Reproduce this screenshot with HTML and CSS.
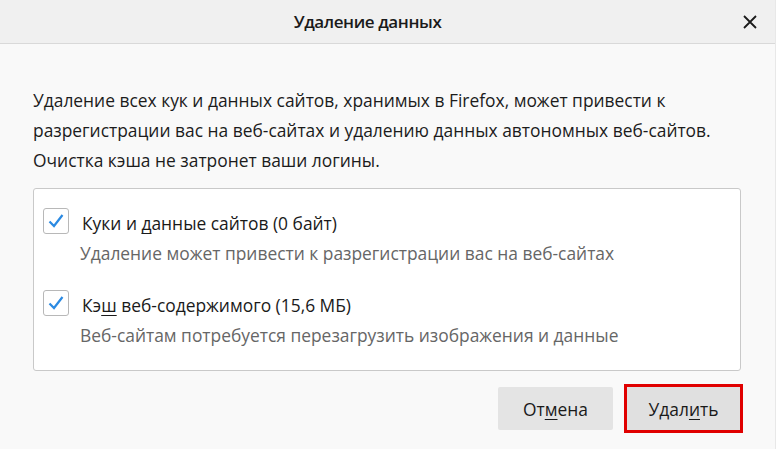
FILE: index.html
```html
<!DOCTYPE html>
<html lang="ru">

<head>
  <meta charset="UTF-8">
  <meta name="viewport" content="width=device-width, initial-scale=1.0">
  <title>Удаление данных</title>
  <link rel="stylesheet" href="styles.css">
</head>

<body>
  <div class="dialog">
    <div class="dialog-header">
      <span></span>
      <h1 class="dialog-title">Удаление данных</h1>
      <button class="close-button" aria-label="Закрыть">
        <svg width="14" height="14" viewBox="0 0 14 14">
          <path d="M1 1 L13 13 M13 1 L1 13" stroke="#1a1a1a" stroke-width="1.8" fill="none" />
        </svg>
      </button>
    </div>

    <div class="dialog-body">
      <p class="description">
        Удаление всех кук и данных сайтов, хранимых в Firefox, может привести к<br>
        разрегистрации вас на веб-сайтах и удалению данных автономных веб-сайтов.<br>
        Очистка кэша не затронет ваши логины.
      </p>

      <div class="options-box">
        <label class="option">
          <span class="checkbox">
            <svg width="18" height="16" viewBox="0 0 18 16">
              <path d="M2.5 8.5 L7 13 L15.5 2" stroke="#2b8ae2" stroke-width="2.2" fill="none" />
            </svg>
          </span>
          <span class="option-text">
            <span class="option-label">Куки и <u>д</u>анные сайтов (0 байт)</span>
            <span class="option-hint">Удаление может привести к разрегистрации вас на веб-сайтах</span>
          </span>
        </label>

        <label class="option">
          <span class="checkbox">
            <svg width="18" height="16" viewBox="0 0 18 16">
              <path d="M2.5 8.5 L7 13 L15.5 2" stroke="#2b8ae2" stroke-width="2.2" fill="none" />
            </svg>
          </span>
          <span class="option-text">
            <span class="option-label">Кэ<u>ш</u> веб-содержимого (15,6 МБ)</span>
            <span class="option-hint">Веб-сайтам потребуется перезагрузить изображения и данные</span>
          </span>
        </label>
      </div>

      <div class="dialog-buttons">
        <button class="btn btn-cancel">От<u>м</u>ена</button>
        <button class="btn btn-primary">Удал<u>и</u>ть</button>
      </div>
    </div>
  </div>
</body>

</html>
```

FILE: styles.css
```css
* {
  margin: 0;
  padding: 0;
  box-sizing: border-box;
}

body {
  background-color: #f9f9f9;
  font-family: "Open Sans", "Noto Sans", sans-serif;
  color: #1c1c1c;
}

.dialog {
  width: 776px;
  height: 449px;
  border-right: 1px solid #e8e8e8;
}

.dialog-header {
  display: grid;
  grid-template-columns: 1fr auto 1fr;
  align-items: center;
  height: 44px;
  background-color: #f0f0f0;
  border-bottom: 1px solid #d9d9d9;
}

.dialog-title {
  font-size: 17px;
  font-weight: 600;
  color: #1a1a1a;
  letter-spacing: -0.4px;
  margin-right: 40px;
}

.close-button {
  justify-self: end;
  display: flex;
  align-items: center;
  justify-content: center;
  width: 30px;
  height: 30px;
  margin-right: 10px;
  border: none;
  background: none;
  cursor: pointer;
}

.dialog-body {
  padding: 41px 34px 0 33px;
}

.description {
  font-size: 17.4px;
  line-height: 30px;
}

.options-box {
  margin-top: 13px;
  height: 183px;
  padding: 19px 9px 0;
  background-color: #fff;
  border: 1px solid #c9c9c9;
  border-radius: 3px;
}

.option {
  display: flex;
  gap: 13px;
  margin-bottom: 22px;
}

.checkbox {
  flex: none;
  display: flex;
  align-items: center;
  justify-content: center;
  width: 26px;
  height: 26px;
  border: 1px solid #b8b8b8;
  border-radius: 3px;
  background-color: #fff;
}

.option-text {
  display: flex;
  flex-direction: column;
}

.option-label {
  font-size: 17.4px;
  line-height: 30px;
  color: #1a1a1a;
}

.option-hint {
  font-size: 17.4px;
  line-height: 30px;
  color: #666;
  margin-left: -2px;
}

u {
  text-underline-offset: 3px;
  text-decoration-skip-ink: none;
}

.dialog-buttons {
  display: flex;
  justify-content: flex-end;
  gap: 14px;
  margin-top: 16px;
}

.btn {
  height: 43px;
  font-family: inherit;
  font-size: 17.4px;
  color: #1a1a1a;
  background-color: #e4e4e4;
  border: none;
  border-radius: 2px;
  cursor: pointer;
}

.btn-cancel {
  width: 115px;
}

.btn-primary {
  width: 113px;
  margin-right: 1px;
  background-color: #e0e0e0;
  border-radius: 0;
  outline: 3px solid #e00000;
}
```
